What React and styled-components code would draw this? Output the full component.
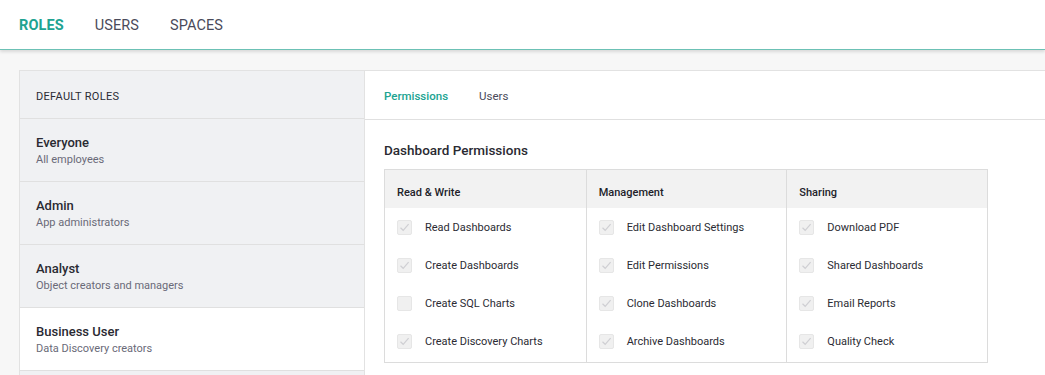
import React from "react";
import styled, { createGlobalStyle } from "styled-components";

const Global = createGlobalStyle`
  html, body { margin: 0; padding: 0; background: #f7f7f7; }
  body { font-family: Roboto, "Noto Sans", sans-serif; color: #2b2b33; }
  * { box-sizing: border-box; }
`;

const TEAL = "#20a391";

const Header = styled.header`
  height: 50px;
  background: #fff;
  border-bottom: 1px solid #6cc1b5;
  box-shadow: 0 2px 3px rgba(0,0,0,0.12);
  display: flex;
  align-items: center;
  padding: 1px 19px 0;
  gap: 31px;
  position: relative;
  z-index: 1;
`;

const NavItem = styled.div`
  font-size: 14.5px;
  letter-spacing: 0.1px;
  font-weight: ${p => (p.$active ? 700 : 400)};
  color: ${p => (p.$active ? TEAL : "#4a4a5a")};
`;

const Main = styled.main`
  padding: 20px 0 0 19px;
`;

const Panel = styled.div`
  display: flex;
  border-top: 1px solid #e2e2e2;
  border-left: 1px solid #e2e2e2;
  height: 310px;
  overflow: hidden;
`;

const Sidebar = styled.aside`
  width: 345px;
  flex: none;
  background: #f0f1f3;
  border-right: 1px solid #e2e2e2;
`;

const SideHead = styled.div`
  height: 48px;
  display: flex;
  align-items: center;
  padding: 3px 16px 0;
  font-size: 11px;
  letter-spacing: 0.3px;
  color: #2b2b33;
  border-bottom: 1px solid #e0e0e0;
`;

const Role = styled.div`
  height: 63px;
  padding: 15px 16px 0;
  background: ${p => (p.$selected ? "#fff" : "#f0f1f3")};
  border-bottom: 1px solid #e0e0e0;
`;

const RoleName = styled.div`
  font-size: 13px;
  font-weight: 500;
  color: #2a2a32;
  line-height: 17px;
`;

const RoleDesc = styled.div`
  font-size: 11px;
  color: #6a6a78;
  line-height: 17px;
`;

const Content = styled.section`
  flex: 1;
  background: #fff;
`;

const Tabs = styled.div`
  height: 49px;
  display: flex;
  align-items: center;
  gap: 31px;
  padding: 2px 19px 0;
  border-bottom: 1px solid #e0e0e0;
`;

const Tab = styled.div`
  font-size: 11.5px;
  font-weight: ${p => (p.$active ? 500 : 400)};
  color: ${p => (p.$active ? TEAL : "#4a4a5a")};
`;

const Body = styled.div`
  padding: 22px 19px 0;
`;

const Title = styled.h2`
  margin: 0 0 11px;
  font-size: 13.5px;
  font-weight: 500;
  color: #2a2a32;
  line-height: 16px;
`;

const Table = styled.div`
  width: 604px;
  display: grid;
  grid-template-columns: repeat(3, 1fr);
  border: 1px solid #dcdcdc;
`;

const Column = styled.div`
  border-left: ${p => (p.$first ? "none" : "1px solid #dcdcdc")};
  padding-bottom: 2px;
`;

const ColHead = styled.div`
  height: 38px;
  background: #f2f2f2;
  display: flex;
  align-items: center;
  padding: 7px 12px 0;
  font-size: 11px;
  font-weight: 500;
  color: #22222a;
`;

const Item = styled.label`
  height: 38px;
  display: flex;
  align-items: center;
  gap: 13px;
  padding: 0 12px;
  font-size: 11px;
  color: #2b2b33;
`;

const Box = styled.span`
  width: 15px;
  height: 15px;
  border-radius: 2px;
  background: #f0f0f0;
  border: 1px solid #e6e6e6;
  display: flex;
  align-items: center;
  justify-content: center;
  flex: none;
`;

const Check = ({ on }) => (
  <Box>
    {on && (
      <svg width="11" height="11" viewBox="0 0 11 11">
        <path d="M1.5 5.8 L4.2 8.3 L9.6 2.2" fill="none" stroke="#cfcfd3" strokeWidth="1.2" />
      </svg>
    )}
  </Box>
);

const columns = [
  {
    title: "Read & Write",
    items: [
      ["Read Dashboards", true],
      ["Create Dashboards", true],
      ["Create SQL Charts", false],
      ["Create Discovery Charts", true],
    ],
  },
  {
    title: "Management",
    items: [
      ["Edit Dashboard Settings", true],
      ["Edit Permissions", true],
      ["Clone Dashboards", true],
      ["Archive Dashboards", true],
    ],
  },
  {
    title: "Sharing",
    items: [
      ["Download PDF", true],
      ["Shared Dashboards", true],
      ["Email Reports", true],
      ["Quality Check", true],
    ],
  },
];

const roles = [
  ["Everyone", "All employees"],
  ["Admin", "App administrators"],
  ["Analyst", "Object creators and managers"],
  ["Business User", "Data Discovery creators", true],
  ["", ""],
];

export default function App() {
  return (
    <>
      <Global />
      <Header>
        <NavItem $active>ROLES</NavItem>
        <NavItem>USERS</NavItem>
        <NavItem>SPACES</NavItem>
      </Header>
      <Main>
        <Panel>
          <Sidebar>
            <SideHead>DEFAULT ROLES</SideHead>
            {roles.map(([n, d, s], i) => (
              <Role key={i} $selected={s}>
                <RoleName>{n}</RoleName>
                <RoleDesc>{d}</RoleDesc>
              </Role>
            ))}
          </Sidebar>
          <Content>
            <Tabs>
              <Tab $active>Permissions</Tab>
              <Tab>Users</Tab>
            </Tabs>
            <Body>
              <Title>Dashboard Permissions</Title>
              <Table>
                {columns.map((c, ci) => (
                  <Column key={c.title} $first={ci === 0}>
                    <ColHead>{c.title}</ColHead>
                    {c.items.map(([label, on]) => (
                      <Item key={label}>
                        <Check on={on} />
                        {label}
                      </Item>
                    ))}
                  </Column>
                ))}
              </Table>
            </Body>
          </Content>
        </Panel>
      </Main>
    </>
  );
}
